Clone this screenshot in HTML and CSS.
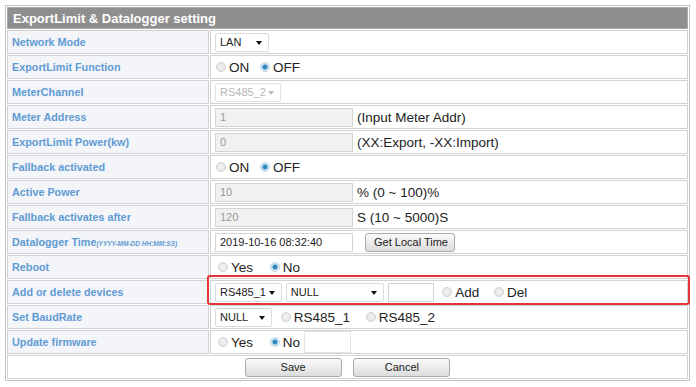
FILE: index.html
```html
<!DOCTYPE html>
<html>
<head>
    <title>ExportLimit &amp; Datalogger setting</title>
    <link rel="stylesheet" href="styles.css">
</head>
<body>
    <table class="setting">
        <tr>
            <th colspan="2">ExportLimit &amp; Datalogger setting</th>
        </tr>
        <tr>
            <td class="label">Network Mode</td>
            <td><span class="sel"><select class="w-lan"><option>LAN</option></select></span></td>
        </tr>
        <tr>
            <td class="label">ExportLimit Function</td>
            <td>
                <label class="opt"><input type="radio" name="elf">ON</label>
                <label class="opt"><input type="radio" name="elf" checked>OFF</label>
            </td>
        </tr>
        <tr>
            <td class="label">MeterChannel</td>
            <td><span class="sel off"><select class="w-ch" disabled><option>RS485_2</option></select></span></td>
        </tr>
        <tr>
            <td class="label">Meter Address</td>
            <td><input type="text" class="field" value="1" disabled><span class="note">(Input Meter Addr)</span></td>
        </tr>
        <tr>
            <td class="label">ExportLimit Power(kw)</td>
            <td><input type="text" class="field" value="0" disabled><span class="note">(XX:Export, -XX:Import)</span></td>
        </tr>
        <tr>
            <td class="label">Fallback activated</td>
            <td>
                <label class="opt"><input type="radio" name="fba">ON</label>
                <label class="opt"><input type="radio" name="fba" checked>OFF</label>
            </td>
        </tr>
        <tr>
            <td class="label">Active Power</td>
            <td><input type="text" class="field" value="10" disabled><span class="note">% (0 ~ 100)%</span></td>
        </tr>
        <tr>
            <td class="label">Fallback activates after</td>
            <td><input type="text" class="field" value="120" disabled><span class="note">S (10 ~ 5000)S</span></td>
        </tr>
        <tr>
            <td class="label">Datalogger Time<span class="fmt">(YYYY-MM-DD HH:MM:SS)</span></td>
            <td><input type="text" class="field live" value="2019-10-16 08:32:40"><button class="btn btn-time">Get Local Time</button></td>
        </tr>
        <tr>
            <td class="label">Reboot</td>
            <td>
                <label class="opt wide yn"><input type="radio" name="rb">Yes</label>
                <label class="opt"><input type="radio" name="rb" checked>No</label>
            </td>
        </tr>
        <tr>
            <td class="label">Add or delete devices</td>
            <td class="marked">
                <span class="sel"><select class="w-port"><option>RS485_1</option></select></span>
                <span class="sel"><select class="w-null"><option>NULL</option></select></span>
                <input type="text" class="field small">
                <label class="opt add"><input type="radio" name="ad">Add</label>
                <label class="opt"><input type="radio" name="ad">Del</label>
                <span class="highlight"></span>
            </td>
        </tr>
        <tr>
            <td class="label">Set BaudRate</td>
            <td>
                <span class="sel"><select class="w-baud"><option>NULL</option></select></span>
                <label class="opt baud"><input type="radio" name="br">RS485_1</label>
                <label class="opt"><input type="radio" name="br">RS485_2</label>
            </td>
        </tr>
        <tr>
            <td class="label">Update firmware</td>
            <td>
                <label class="opt wide yn"><input type="radio" name="fw">Yes</label>
                <label class="opt last"><input type="radio" name="fw" checked>No</label><input type="text" class="field tiny">
            </td>
        </tr>
        <tr>
            <td colspan="2" class="actions">
                <button class="btn btn-wide">Save</button>
                <button class="btn btn-wide">Cancel</button>
            </td>
        </tr>
    </table>
</body>
</html>
```

FILE: styles.css
```css
body {
    margin: 5px 0 0 5px;
    font-family: "Liberation Sans", Arial, sans-serif;
    background: #fff;
    color: #222;
}
.setting {
    width: 685px;
    border: 1px solid #c4c4c4;
    border-spacing: 1px;
}
.setting th {
    height: 20px;
    padding: 0 5px;
    background: #8f8f8f;
    color: #fff;
    font-size: 13px;
    font-weight: bold;
    text-align: left;
    border: 1px solid #a8a8a8;
}
.setting td {
    height: 22px;
    padding: 0 0 0 4px;
    border: 1px solid #d2d2d2;
    white-space: nowrap;
    font-size: 13.5px;
}
.setting td.label {
    width: 196px;
    background: #f3f5f8;
    color: #5f9bd4;
    font-size: 10.8px;
    font-weight: bold;
}
.fmt {
    font-size: 6.5px;
    font-style: italic;
}
.sel {
    position: relative;
    display: inline-block;
    vertical-align: middle;
}
.sel::after {
    content: "";
    position: absolute;
    right: 7px;
    top: 8px;
    border-left: 3px solid transparent;
    border-right: 3px solid transparent;
    border-top: 4px solid #111;
}
.sel.off::after {
    border-top-color: #bbb;
}
select {
    appearance: none;
    -webkit-appearance: none;
    height: 19px;
    padding: 0 0 0 4px;
    border: 1px solid #dcdcdc;
    border-radius: 2px;
    background: #fff;
    font-family: inherit;
    font-size: 11px;
    color: #222;
}
select:disabled {
    color: #999;
    border-color: #d6d6d6;
}
.w-lan { width: 54px; }
.w-ch { width: 66px; }
.w-port { width: 67px; }
.w-null { width: 98px; }
.w-baud { width: 57px; }
.field {
    width: 138px;
    height: 19px;
    box-sizing: border-box;
    padding: 0 4px;
    border: 1px solid #d4d4d4;
    background: #f1f1f1;
    font-family: inherit;
    font-size: 11px;
    color: #999;
    vertical-align: middle;
}
.field.live {
    background: #fff;
    color: #222;
}
.field.small {
    width: 46px;
    background: #fff;
}
.field.tiny {
    width: 47px;
    height: 22px;
    background: #fff;
    border-color: #e4e4e4;
}
.note {
    margin-left: 4px;
    vertical-align: middle;
}
.opt {
    display: inline-block;
    margin-right: 6px;
    vertical-align: middle;
    color: #222;
}
.opt.wide {
    margin-right: 12px;
}
.opt.yn input {
    margin-left: 3px;
}
.opt.add {
    margin-left: 4px;
    margin-right: 10px;
}
.opt.baud {
    margin-left: 4px;
    margin-right: 11px;
}
.opt.last {
    margin-right: 4px;
}
.opt input {
    appearance: none;
    -webkit-appearance: none;
    width: 10px;
    height: 10px;
    margin: 0 3px 0 1px;
    border: 1px solid #d2d2d2;
    border-radius: 50%;
    background: radial-gradient(circle, #f4f4f4 0, #e0e0e0 100%);
    vertical-align: 0;
}
.opt input:checked {
    background: radial-gradient(circle, #2f8ac2 0, #2f8ac2 2px, #cfe3f1 3px, #eaf2f8 100%);
    border-color: #c4d6e4;
}
.btn {
    height: 19px;
    padding: 0 8px;
    border: 1px solid #aaa;
    border-radius: 3px;
    background: linear-gradient(#fafafa, #dcdcdc);
    font-family: inherit;
    font-size: 11px;
    color: #222;
    vertical-align: middle;
}
.btn-time {
    margin-left: 12px;
    width: 90px;
}
.btn-wide {
    width: 97px;
    margin: 0 4px;
}
.setting td.actions {
    padding: 0;
    text-align: center;
}
.marked {
    position: relative;
}
.highlight {
    position: absolute;
    left: -4px;
    right: -3px;
    top: -6px;
    bottom: -2px;
    border: 2px solid #e2343a;
    border-radius: 3px;
}
```
